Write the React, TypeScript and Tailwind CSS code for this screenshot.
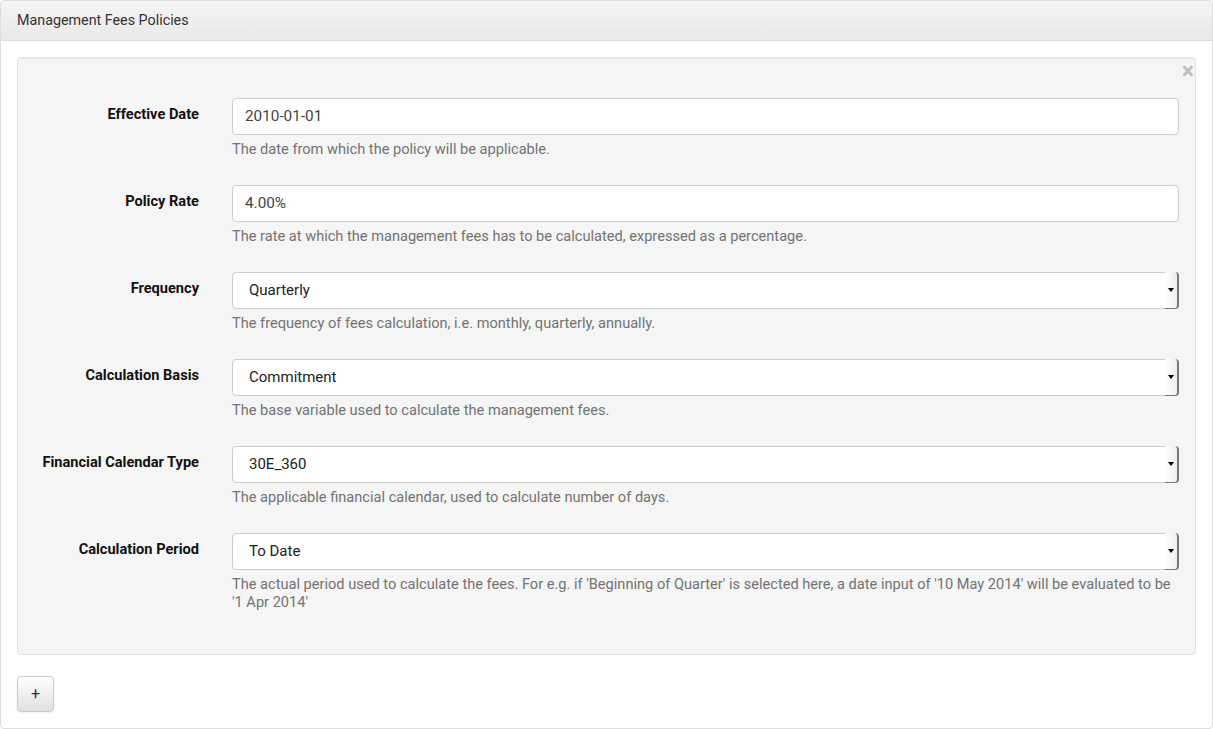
import React from "react";

type Field = {
	label: string;
	value: string;
	kind: "input" | "select";
	help: string;
};

const FIELDS: Field[] = [
	{
		label: "Effective Date",
		value: "2010-01-01",
		kind: "input",
		help: "The date from which the policy will be applicable.",
	},
	{
		label: "Policy Rate",
		value: "4.00%",
		kind: "input",
		help: "The rate at which the management fees has to be calculated, expressed as a percentage.",
	},
	{
		label: "Frequency",
		value: "Quarterly",
		kind: "select",
		help: "The frequency of fees calculation, i.e. monthly, quarterly, annually.",
	},
	{
		label: "Calculation Basis",
		value: "Commitment",
		kind: "select",
		help: "The base variable used to calculate the management fees.",
	},
	{
		label: "Financial Calendar Type",
		value: "30E_360",
		kind: "select",
		help: "The applicable financial calendar, used to calculate number of days.",
	},
	{
		label: "Calculation Period",
		value: "To Date",
		kind: "select",
		help: "The actual period used to calculate the fees. For e.g. if 'Beginning of Quarter' is selected here, a date input of '10 May 2014' will be evaluated to be '1 Apr 2014'",
	},
];

const FieldRow: React.FC<{ field: Field }> = ({ field }) => (
	<div className="flex">
		<label className="w-[181px] shrink-0 pt-[6px] text-right text-[14.6px] font-bold leading-5 text-[#111]">
			{field.label}
		</label>
		<div className="ml-[33px] flex-1">
			{field.kind === "input" ? (
				<div className="flex h-[37px] items-center rounded-[4px] border border-[#ccc] bg-white pl-[12px] text-[15.3px] text-[#444]">
					{field.value}
				</div>
			) : (
				<div className="relative flex h-[37px] items-center rounded-[4px] border border-[#ccc] bg-white pl-[16px] text-[15px] text-[#222]">
					{field.value}
					<div className="absolute -right-px -top-px bottom-[-1px] flex w-[14px] items-center justify-center rounded-r-[4px] border-r-2 border-b border-[#777] bg-gradient-to-r from-white to-[#eee]">
						<div className="h-0 w-0 border-x-[3px] border-t-[4px] border-x-transparent border-t-black" />
					</div>
				</div>
			)}
			<p className="mt-[5px] text-[14.6px] leading-[18px] text-[#737373]">{field.help}</p>
		</div>
	</div>
);

export default function App() {
	return (
		<div
			className="h-[729px] w-[1213px] bg-white"
			style={{ fontFamily: "Roboto, 'Liberation Sans', sans-serif" }}
		>
			<div className="flex h-full flex-col rounded-[4px] border border-[#ddd]">
				{/* Panel heading */}
				<div className="flex h-[40px] items-center rounded-t-[4px] border-b border-[#ddd] bg-gradient-to-b from-[#f5f5f5] to-[#e8e8e8] px-4 text-[14.3px] text-[#333]">
					Management Fees Policies
				</div>

				{/* Panel body */}
				<div className="px-4 pt-4">
					<div className="relative rounded-[4px] border border-[#e3e3e3] bg-[#f5f5f5] pb-[43px] pl-0 pr-4 pt-[40px] shadow-[inset_0_1px_1px_rgba(0,0,0,0.05)]">
						<button
							type="button"
							className="absolute right-[1px] top-[4px] text-[23px] font-bold leading-5 text-[#c0c0c0]"
						>
							×
						</button>
						<div className="flex flex-col gap-[27px]">
							{FIELDS.map((f) => (
								<FieldRow key={f.label} field={f} />
							))}
						</div>
					</div>

					<button
						type="button"
						className="mt-[21px] flex h-[36px] w-[37px] items-center justify-center rounded-[4px] border border-[#ccc] bg-gradient-to-b from-white to-[#e0e0e0] text-[16px] text-[#333] shadow-[0_1px_2px_rgba(0,0,0,0.08)]"
					>
						+
					</button>
				</div>
			</div>
		</div>
	);
}
